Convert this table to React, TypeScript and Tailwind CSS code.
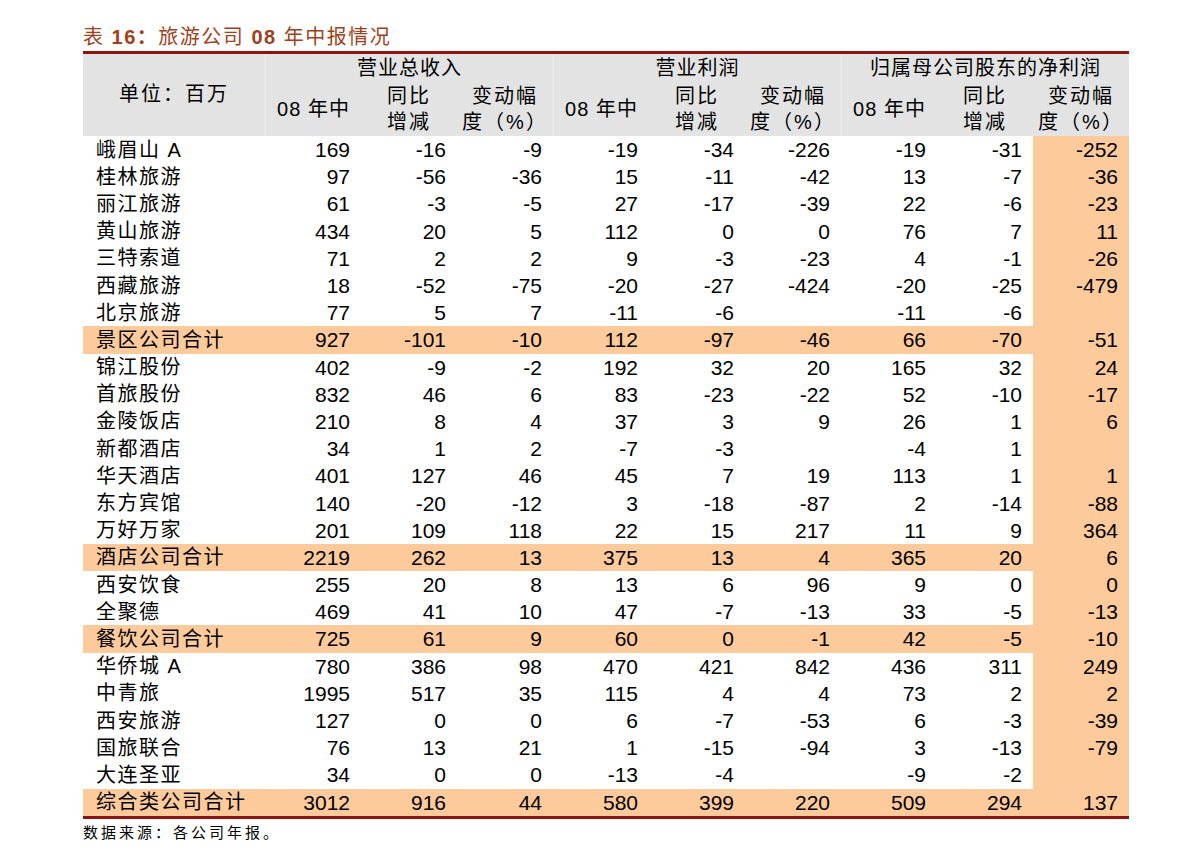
import React from "react";

type Row = { name: string; v: string[]; total?: boolean };

const rows: Row[] = [
  { name: "峨眉山 A", v: ["169", "-16", "-9", "-19", "-34", "-226", "-19", "-31", "-252"] },
  { name: "桂林旅游", v: ["97", "-56", "-36", "15", "-11", "-42", "13", "-7", "-36"] },
  { name: "丽江旅游", v: ["61", "-3", "-5", "27", "-17", "-39", "22", "-6", "-23"] },
  { name: "黄山旅游", v: ["434", "20", "5", "112", "0", "0", "76", "7", "11"] },
  { name: "三特索道", v: ["71", "2", "2", "9", "-3", "-23", "4", "-1", "-26"] },
  { name: "西藏旅游", v: ["18", "-52", "-75", "-20", "-27", "-424", "-20", "-25", "-479"] },
  { name: "北京旅游", v: ["77", "5", "7", "-11", "-6", "", "-11", "-6", ""] },
  { name: "景区公司合计", v: ["927", "-101", "-10", "112", "-97", "-46", "66", "-70", "-51"], total: true },
  { name: "锦江股份", v: ["402", "-9", "-2", "192", "32", "20", "165", "32", "24"] },
  { name: "首旅股份", v: ["832", "46", "6", "83", "-23", "-22", "52", "-10", "-17"] },
  { name: "金陵饭店", v: ["210", "8", "4", "37", "3", "9", "26", "1", "6"] },
  { name: "新都酒店", v: ["34", "1", "2", "-7", "-3", "", "-4", "1", ""] },
  { name: "华天酒店", v: ["401", "127", "46", "45", "7", "19", "113", "1", "1"] },
  { name: "东方宾馆", v: ["140", "-20", "-12", "3", "-18", "-87", "2", "-14", "-88"] },
  { name: "万好万家", v: ["201", "109", "118", "22", "15", "217", "11", "9", "364"] },
  { name: "酒店公司合计", v: ["2219", "262", "13", "375", "13", "4", "365", "20", "6"], total: true },
  { name: "西安饮食", v: ["255", "20", "8", "13", "6", "96", "9", "0", "0"] },
  { name: "全聚德", v: ["469", "41", "10", "47", "-7", "-13", "33", "-5", "-13"] },
  { name: "餐饮公司合计", v: ["725", "61", "9", "60", "0", "-1", "42", "-5", "-10"], total: true },
  { name: "华侨城 A", v: ["780", "386", "98", "470", "421", "842", "436", "311", "249"] },
  { name: "中青旅", v: ["1995", "517", "35", "115", "4", "4", "73", "2", "2"] },
  { name: "西安旅游", v: ["127", "0", "0", "6", "-7", "-53", "6", "-3", "-39"] },
  { name: "国旅联合", v: ["76", "13", "21", "1", "-15", "-94", "3", "-13", "-79"] },
  { name: "大连圣亚", v: ["34", "0", "0", "-13", "-4", "", "-9", "-2", ""] },
  { name: "综合类公司合计", v: ["3012", "916", "44", "580", "399", "220", "509", "294", "137"], total: true },
];

const groups = ["营业总收入", "营业利润", "归属母公司股东的净利润"];

const font = { fontFamily: '"Liberation Sans", "Noto Sans CJK SC", sans-serif' };

export default function App() {
  return (
    <div className="w-[1190px] h-[861px] bg-white text-black" style={font}>
      <div className="pl-[83px] pt-[22px]">
        <div className="h-[29px] flex items-center text-[20px] text-[#a2401c] leading-none whitespace-pre tracking-[1.5px]">
          <span>表 </span>
          <span className="font-bold">16：</span>
          <span>旅游公司 </span>
          <span className="font-bold">08</span>
          <span> 年中报情况</span>
        </div>

        <div className="w-[1046px]">
          <div className="h-[3px] bg-[#8e1414]" />

          {/* header */}
          <div className="grid grid-cols-[182px_repeat(9,96px)] grid-rows-[28px_54px] bg-[#e3e3e3] text-[20px] leading-[26px]">
            <div className="row-span-2 flex items-center justify-center pb-[2px]">
              <span className="tracking-[2px]">单位：百万</span>
            </div>
            {groups.map((g) => (
              <div key={g} className="col-span-3 flex items-center justify-center border-l border-[#f0f0f0] tracking-[1px]">
                {g}
              </div>
            ))}
            {groups.map((g) => (
              <React.Fragment key={g + "s"}>
                <div className="flex items-center justify-center border-l border-[#f0f0f0] tracking-[1px]">08 年中</div>
                <div className="flex flex-col items-center justify-center tracking-[2px]">
                  <span>同比</span>
                  <span>增减</span>
                </div>
                <div className="flex flex-col items-center justify-center tracking-[2px]">
                  <span>变动幅</span>
                  <span>度（%）</span>
                </div>
              </React.Fragment>
            ))}
          </div>

          {/* body */}
          <div>
            {rows.map((r) => (
              <div
                key={r.name}
                className={
                  "grid grid-cols-[182px_repeat(9,96px)] h-[27.2px] " + (r.total ? "bg-[#fdca9b]" : "")
                }
              >
                <div className="pl-[13px] flex items-center text-[20px] tracking-[1.5px] leading-none">{r.name}</div>
                {r.v.map((x, i) => (
                  <div
                    key={i}
                    className={
                      "flex items-center justify-end pr-[11px] text-[21px] leading-none " +
                      (i === 8 ? "bg-[#fdca9b]" : "")
                    }
                  >
                    {x}
                  </div>
                ))}
              </div>
            ))}
          </div>

          <div className="h-[3px] bg-[#8e1414]" />
        </div>

        <div className="pt-[4px] text-[15px] leading-[20px] tracking-[3px]">数据来源：各公司年报。</div>
      </div>
    </div>
  );
}
